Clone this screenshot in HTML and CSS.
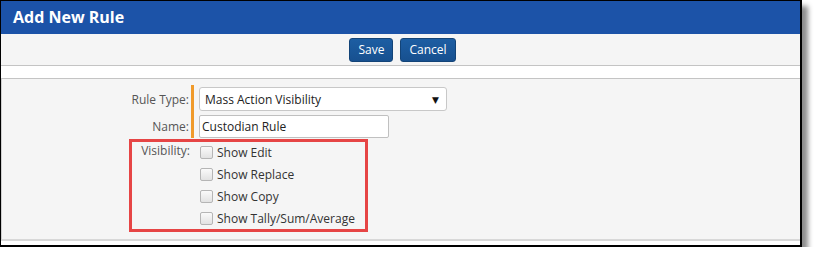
FILE: index.html
```html
<!DOCTYPE html>
<html>
<head>
<meta charset="utf-8">
<link rel="stylesheet" href="styles.css">
</head>
<body>
<div class="window">
  <div class="header">Add New Rule</div>
  <div class="toolbar">
    <button class="btn">Save</button>
    <button class="btn">Cancel</button>
  </div>
  <div class="gap"></div>
  <div class="panel">
    <div class="form-top">
      <div class="labels">
        <div class="lbl row1">Rule Type:</div>
        <div class="lbl row2">Name:</div>
      </div>
      <div class="fields">
        <div class="select">
          <span>Mass Action Visibility</span>
          <span class="arrow">&#9660;</span>
        </div>
        <div class="input">Custodian Rule</div>
      </div>
    </div>
    <div class="visibility">
      <div class="vis-label">Visibility:</div>
      <div class="checks">
        <div class="check"><span class="box"></span>Show Edit</div>
        <div class="check"><span class="box"></span>Show Replace</div>
        <div class="check"><span class="box"></span>Show Copy</div>
        <div class="check"><span class="box"></span>Show Tally/Sum/Average</div>
      </div>
    </div>
  </div>
</div>
</body>
</html>
```
FILE: styles.css
```css
* { box-sizing: border-box; }
html, body { margin: 0; padding: 0; background: #fff; }
body { font-family: "Open Sans", "DejaVu Sans", sans-serif; font-size: 12px; color: #333; }

.window {
  width: 802px;
  height: 247px;
  border: 1px solid #000;
  border-right-width: 2px;
  border-bottom-width: 2px;
  background: #fff;
  box-shadow: 6px 6px 5px rgba(0,0,0,0.45);
  display: flex;
  flex-direction: column;
}

.header {
  height: 33px;
  background: #1c53a8;
  color: #fff;
  font-weight: 700;
  font-size: 16px;
  padding-left: 12px;
  line-height: 33px;
  flex: none;
}

.toolbar {
  height: 32px;
  background: #f5f5f5;
  border-bottom: 1px solid #c4c4c4;
  display: flex;
  justify-content: center;
  align-items: center;
  gap: 7px;
  padding-left: 4px;
  flex: none;
}

.btn {
  height: 24px;
  padding: 0 8px;
  font-family: "Open Sans", sans-serif;
  font-size: 12px;
  color: #fff;
  background: linear-gradient(#1d5ea3, #17508f);
  border: 1px solid #134478;
  border-radius: 3px;
  line-height: 20px;
}

.gap { height: 12px; flex: none; }

.panel {
  flex: 1;
  background: #f5f5f5;
  border-top: 1px solid #c4c4c4;
  border-left: 1px solid #d0d0d0;
  border-bottom: 2px solid #d8d8d8;
  margin-bottom: 4px;
  padding-top: 6px;
}

.form-top { display: flex; }

.labels {
  width: 189px;
  padding-right: 2px;
  text-align: right;
  color: #555;
  padding-top: 2px;
}
.lbl { display: flex; justify-content: flex-end; align-items: center; }
.row1 { height: 24px; margin-bottom: 4px; }
.row2 { height: 23px; }

.fields {
  border-left: 3px solid #f09a2b;
  padding: 2px 0 0 5px;
  display: flex;
  flex-direction: column;
  gap: 4px;
}

.select {
  width: 248px;
  height: 24px;
  background: #fff;
  border: 1px solid #c8c8c8;
  border-radius: 3px;
  display: flex;
  align-items: center;
  justify-content: space-between;
  padding: 0 7px 0 5px;
  color: #222;
  font-size: 12px;
}
.arrow { font-size: 9px; color: #111; }

.input {
  width: 190px;
  height: 23px;
  background: #fff;
  border: 1px solid #c0c0c0;
  border-radius: 2px;
  padding-left: 2px;
  display: flex;
  align-items: center;
  color: #222;
}

.visibility {
  margin: 1px 0 0 127px;
  width: 239px;
  height: 93px;
  border: 3px solid #e64545;
  display: flex;
  padding-top: 2px;
}

.vis-label {
  width: 58px;
  text-align: right;
  color: #555;
  line-height: 14px;
}

.checks {
  margin-left: 10px;
  display: flex;
  flex-direction: column;
  gap: 8px;
  padding-top: 1px;
}

.check {
  display: flex;
  align-items: center;
  height: 14px;
  color: #333;
  white-space: nowrap;
}

.box {
  width: 13px;
  height: 13px;
  border: 1px solid #b5b5b5;
  border-radius: 2px;
  background: linear-gradient(#fafafa, #e2e2e2);
  margin-right: 4px;
  flex: none;
}
```
